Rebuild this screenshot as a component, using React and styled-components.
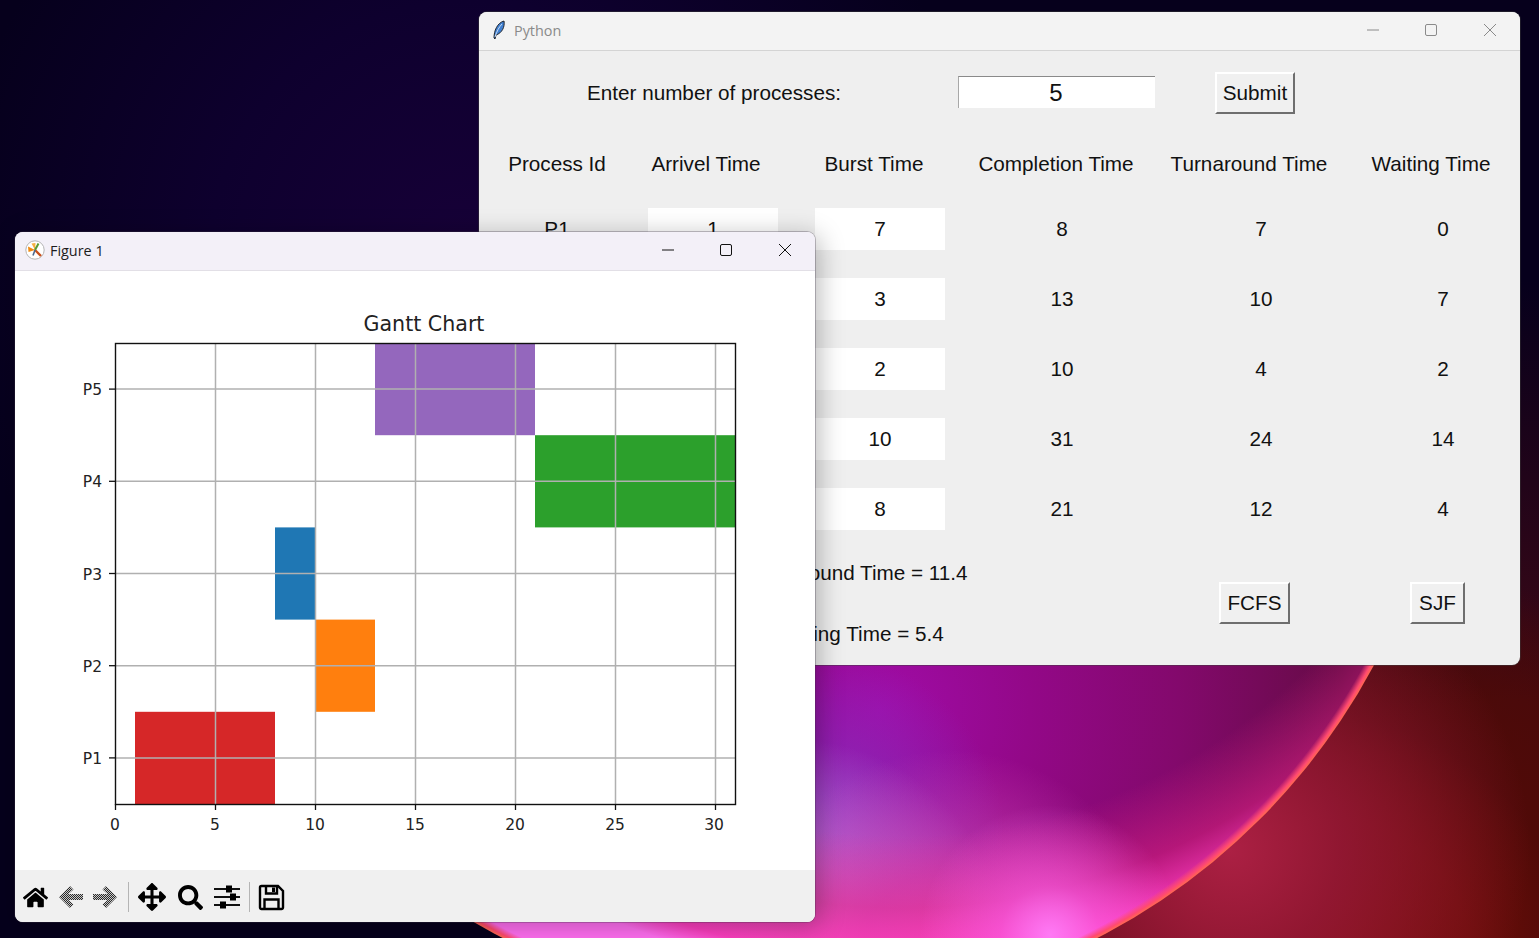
import React from 'react'
import styled, { createGlobalStyle } from 'styled-components'
import { FaHome, FaArrowsAlt, FaSearch } from 'react-icons/fa'

const GlobalStyle = createGlobalStyle`
  html, body { margin: 0; padding: 0; height: 100%; overflow: hidden; }
  * { box-sizing: border-box; }
`

const processes = [
  { id: 'P1', arrival: 1, burst: 7, completion: 8, turnaround: 7, waiting: 0 },
  { id: 'P2', arrival: 3, burst: 3, completion: 13, turnaround: 10, waiting: 7 },
  { id: 'P3', arrival: 6, burst: 2, completion: 10, turnaround: 4, waiting: 2 },
  { id: 'P4', arrival: 7, burst: 10, completion: 31, turnaround: 24, waiting: 14 },
  { id: 'P5', arrival: 9, burst: 8, completion: 21, turnaround: 12, waiting: 4 },
]

const bars = [
  { row: 0, start: 1, end: 8, color: '#d62728' },
  { row: 1, start: 10, end: 13, color: '#ff7f0e' },
  { row: 2, start: 8, end: 10, color: '#1f77b4' },
  { row: 3, start: 21, end: 31, color: '#2ca02c' },
  { row: 4, start: 13, end: 21, color: '#9467bd' },
]

// plot area inside the chart svg
const plot = { left: 100, top: 72, width: 620, height: 461 }
const xPos = (v) => plot.left + v * 20
const rowH = plot.height / 5
const yPos = (r) => plot.top + plot.height - rowH * (r + 0.5)

const Desktop = styled.div`
  position: relative;
  width: 1539px;
  height: 938px;
  overflow: hidden;
  background:
    radial-gradient(circle at 1230px 850px, #ac2044 0, rgba(150, 24, 56, .85) 110px, rgba(110, 16, 40, 0) 300px),
    radial-gradient(circle at 1330px 960px, #7c1006 0, #6c0e08 140px, rgba(80, 10, 8, .9) 240px, rgba(70, 8, 10, 0) 420px),
    radial-gradient(circle at 1500px 900px, #4f0a04 0, #460a0c 200px, rgba(60, 8, 22, .8) 300px, rgba(20, 2, 30, 0) 620px),
    radial-gradient(circle at 470px 260px, #170038 0, #0e002e 260px, rgba(8, 0, 30, 0) 520px),
    #06001c;
`

// the wallpaper's big disc, only its lower part shows past the windows
const Bloom = styled.div`
  position: absolute;
  left: 150px;
  top: -290px;
  width: 1300px;
  height: 1300px;
  border-radius: 50%;
  clip-path: inset(890px 0 0 0);
  background:
    radial-gradient(closest-side, rgba(255, 60, 90, 0) 98.6%, #ff4a70 99.5%, #ff6a50 100%),
    radial-gradient(circle at 900px 1225px, rgba(255, 125, 248, .95) 0, rgba(255, 100, 235, .55) 50px, rgba(240, 70, 200, 0) 130px),
    radial-gradient(circle 720px at 750px 550px, rgba(235, 30, 130, 0) 80%, rgba(235, 36, 140, .5) 90%, rgba(255, 60, 190, .95) 97%, rgba(255, 110, 240, 1) 100%),
    radial-gradient(circle at 800px 1250px, rgba(220, 90, 190, .95) 0, rgba(205, 70, 180, .7) 90px, rgba(180, 40, 160, 0) 210px),
    radial-gradient(circle at 645px 1240px, #d080c8 0, rgba(190, 110, 210, .85) 90px, rgba(150, 70, 200, 0) 210px),
    radial-gradient(circle at 665px 1130px, #8632c6 0, rgba(135, 45, 190, .7) 70px, rgba(140, 30, 170, 0) 190px),
    radial-gradient(circle at 730px 1000px, #a00ca8 0, #930888 150px, #83096c 300px, #660b46 460px);
`

const Win = styled.div`
  position: absolute;
  left: ${(p) => p.$x}px;
  top: ${(p) => p.$y}px;
  width: ${(p) => p.$w}px;
  height: ${(p) => p.$h}px;
  border-radius: 8px;
  overflow: hidden;
  display: flex;
  flex-direction: column;
  background: ${(p) => p.$bg};
  box-shadow: ${(p) => p.$shadow};
`

const TitleBar = styled.div`
  height: 39px;
  flex: none;
  display: flex;
  align-items: center;
  padding: 0 1px 2px 0;
  background: ${(p) => p.$bg};
  border-bottom: 1px solid ${(p) => p.$line};
  color: ${(p) => p.$color};
`

const TitleIcon = styled.svg`
  flex: none;
  margin-left: ${(p) => p.$ml}px;
  margin-right: ${(p) => p.$mr}px;
`

const TitleText = styled.span`
  flex: 1;
  font: 14.4px "Open Sans", "Noto Sans", sans-serif;
`

const CtrlBtn = styled.div`
  width: 58.5px;
  height: 36px;
  display: flex;
  align-items: center;
  justify-content: center;
  svg { display: block; }
`

const Controls = ({ color }) => (
  <>
    <CtrlBtn>
      <svg width="14" height="14" viewBox="0 0 14 14"><path d="M1 7H13" stroke={color} /></svg>
    </CtrlBtn>
    <CtrlBtn>
      <svg width="14" height="14" viewBox="0 0 14 14"><rect x="1.5" y="1.5" width="11" height="11" rx="1.5" fill="none" stroke={color} /></svg>
    </CtrlBtn>
    <CtrlBtn>
      <svg width="14" height="14" viewBox="0 0 14 14"><path d="M1 1L13 13M13 1L1 13" stroke={color} /></svg>
    </CtrlBtn>
  </>
)

const TkBody = styled.div`
  flex: 1;
  display: flex;
  flex-direction: column;
  padding-top: 21px;
  font: 20.7px "Liberation Sans", Arial, sans-serif;
  color: #111;
`

const TopRow = styled.div`
  display: flex;
  align-items: center;
  height: 42px;
`

const TopLabel = styled.div`
  width: 470px;
  text-align: center;
`

const NumberEntry = styled.div`
  width: 197px;
  height: 32px;
  margin: -2px 0 0 9px;
  background: #fff;
  border-top: 1px solid #8a8a8a;
  border-left: 1px solid #a8a8a8;
  padding-right: 2px;
  font-size: 24px;
  line-height: 31px;
  text-align: center;
`

const TkButton = styled.div`
  width: ${(p) => p.$w}px;
  height: 42px;
  line-height: 38px;
  text-align: center;
  background: #f0f0f0;
  border: 2px solid;
  border-color: #fff #6e6e6e #6e6e6e #fff;
  margin-left: ${(p) => p.$ml || 0}px;
`

const HeaderRow = styled.div`
  display: grid;
  grid-template-columns: 156px 142px 194px 170px 216px 148px;
  height: 40px;
  margin-top: 30px;
  align-items: center;
  text-align: center;
  white-space: nowrap;
`

const DataRow = styled.div`
  display: grid;
  grid-template-columns: 156px 156px 178px 186px 212px 152px;
  height: 70px;
  align-items: center;
  justify-items: center;
  text-align: center;
`

const Entry = styled.div`
  width: 130px;
  height: 42px;
  line-height: 42px;
  background: #fff;
`

const Rows = styled.div`
  margin-top: 10px;
`

const Footer = styled.div`
  display: grid;
  grid-template-columns: 676px 185px 1fr;
  grid-template-rows: 61px 61px;
  align-items: center;
  margin-top: -1px;
`

const AvgLabel = styled.div`
  grid-column: 1;
  margin-top: -2px;
  text-align: center;
  white-space: nowrap;
`

const ButtonSlot = styled.div`
  grid-column: ${(p) => p.$col};
  grid-row: 1 / span 2;
  display: flex;
  justify-content: flex-start;
  margin-top: -2px;
`

const Canvas = styled.div`
  flex: none;
  height: 599px;
  background: #fff;
`

const ChartSvg = styled.svg`
  display: block;
  font-family: "DejaVu Sans", sans-serif;
`

const Toolbar = styled.div`
  flex: 1;
  display: flex;
  align-items: center;
  padding: 2px 0 0 8px;
  background: #f0f0f0;
  color: #000;
  svg { display: block; flex: none; }
`

const ToolSep = styled.div`
  width: 1px;
  height: 30px;
  margin: 0 ${(p) => p.$after}px 0 ${(p) => p.$before}px;
  background: #b4b4b4;
`

const ToolSlot = styled.div`
  width: ${(p) => p.$w}px;
  margin-left: ${(p) => p.$ml || 0}px;
  display: flex;
  justify-content: center;
`

const DitherArrow = ({ flip, id }) => (
  <svg width="26" height="26" viewBox="0 0 26 26">
    <defs>
      <pattern id={id} width="2" height="2" patternUnits="userSpaceOnUse">
        <rect width="2" height="2" fill="#c8c8c8" />
        <rect width="1" height="1" fill="#2a2a2a" />
        <rect x="1" y="1" width="1" height="1" fill="#2a2a2a" />
      </pattern>
    </defs>
    <path
      transform={flip ? 'translate(26,0) scale(-1,1)' : undefined}
      d="M1 13L12 2L15.5 5.5L10.5 10H25V16H10.5L15.5 20.5L12 24Z"
      fill={`url(#${id})`}
    />
  </svg>
)

const SlidersIcon = () => (
  <svg width="26" height="26" viewBox="0 0 26 26">
    <path d="M0 5H26M0 13H26M0 21H26" stroke="#111" strokeWidth="2" />
    <rect x="12" y="1.5" width="6" height="7" fill="#000" />
    <rect x="16" y="9.5" width="6" height="7" fill="#000" />
    <rect x="6" y="17.5" width="6" height="7" fill="#000" />
  </svg>
)

const SaveIcon = () => (
  <svg width="27" height="27" viewBox="0 0 27 27">
    <path d="M2 3.5a1.5 1.5 0 0 1 1.5-1.5H20L25 7V23.5a1.5 1.5 0 0 1-1.5 1.5H3.5A1.5 1.5 0 0 1 2 23.5Z" fill="none" stroke="#000" strokeWidth="2.4" />
    <path d="M8 2.5V9.5H19V2.5" fill="none" stroke="#000" strokeWidth="2.4" />
    <rect x="14" y="3.5" width="3" height="4.5" fill="#000" />
    <path d="M6.5 25V15.5H20.5V25" fill="none" stroke="#000" strokeWidth="2.4" />
  </svg>
)

const GanttChart = () => (
  <ChartSvg width="800" height="599" viewBox="0 0 800 599">
    <text x="409" y="60" fontSize="20.6" textAnchor="middle" fill="#222">Gantt Chart</text>
    {bars.map((b) => (
      <rect
        key={b.row}
        x={xPos(b.start)}
        y={yPos(b.row) - rowH / 2}
        width={(b.end - b.start) * 20}
        height={rowH}
        fill={b.color}
      />
    ))}
    {[0, 5, 10, 15, 20, 25, 30].map((t) => (
      <g key={t}>
        {t > 0 && <path d={`M${xPos(t) + 0.5} ${plot.top}V${plot.top + plot.height}`} stroke="#b0b0b0" strokeWidth="1.5" />}
        <path d={`M${xPos(t) + 0.5} ${plot.top + plot.height}v6`} stroke="#111" strokeWidth="1.3" />
        <text x={xPos(t) - (t === 30 ? 1 : 0)} y="559" fontSize="15.5" textAnchor="middle" fill="#222">{t}</text>
      </g>
    ))}
    {processes.map((p, i) => (
      <g key={p.id}>
        <path d={`M${plot.left} ${yPos(i)}H${plot.left + plot.width}`} stroke="#b0b0b0" strokeWidth="1.5" />
        <path d={`M${plot.left - 6} ${yPos(i)}H${plot.left}`} stroke="#111" strokeWidth="1.3" />
        <text x="87" y={yPos(i) + 6} fontSize="15.5" textAnchor="end" fill="#222">{p.id}</text>
      </g>
    ))}
    <rect x={plot.left + 0.5} y={plot.top + 0.5} width={plot.width} height={plot.height} fill="none" stroke="#111" strokeWidth="1.4" />
  </ChartSvg>
)

const App = () => (
  <Desktop>
    <GlobalStyle />
    <Bloom />

    <Win $x={479} $y={12} $w={1041} $h={653} $bg="#efefef" $shadow="0 0 0 1px rgba(60,60,60,.45)">
      <TitleBar $bg="#f3f3f3" $line="#d4d4d4" $color="#8a8a8a">
        <TitleIcon $ml={12} $mr={7} width="16" height="20" viewBox="0 0 16 20">
          <path d="M3 18C3 11 6 3 13 1C14 7 11 13 5 15L4 19Z" fill="#3f7fd0" stroke="#20242c" strokeWidth="1" />
          <path d="M4 17C6 11 8 7 11 4" stroke="#c8dcf4" strokeWidth="1" fill="none" />
        </TitleIcon>
        <TitleText>Python</TitleText>
        <Controls color="#8a8a8a" />
      </TitleBar>
      <TkBody>
        <TopRow>
          <TopLabel>Enter number of processes:</TopLabel>
          <NumberEntry>5</NumberEntry>
          <TkButton $w={80} $ml={60}>Submit</TkButton>
        </TopRow>
        <HeaderRow>
          <div>Process Id</div>
          <div>Arrivel Time</div>
          <div>Burst Time</div>
          <div>Completion Time</div>
          <div>Turnaround Time</div>
          <div>Waiting Time</div>
        </HeaderRow>
        <Rows>
          {processes.map((p) => (
            <DataRow key={p.id}>
              <div>{p.id}</div>
              <Entry>{p.arrival}</Entry>
              <Entry>{p.burst}</Entry>
              <div>{p.completion}</div>
              <div>{p.turnaround}</div>
              <div>{p.waiting}</div>
            </DataRow>
          ))}
        </Rows>
        <Footer>
          <AvgLabel>Average Turnaround Time = 11.4</AvgLabel>
          <ButtonSlot $col={2}>
            <TkButton $w={71} $ml={64}>FCFS</TkButton>
          </ButtonSlot>
          <ButtonSlot $col={3}>
            <TkButton $w={55} $ml={70}>SJF</TkButton>
          </ButtonSlot>
          <AvgLabel>Average Waiting Time = 5.4</AvgLabel>
        </Footer>
      </TkBody>
    </Win>

    <Win $x={15} $y={232} $w={800} $h={690} $bg="#fff" $shadow="0 0 0 1px rgba(60,50,70,.3), 4px 4px 26px rgba(0,0,0,.28)">
      <TitleBar $bg="#f3f0f8" $line="#e2dfe6" $color="#1c1c1c">
        <TitleIcon $ml={10} $mr={5} width="20" height="20" viewBox="0 0 20 20">
          <circle cx="10" cy="10" r="9.2" fill="#fff" stroke="#b4b4b4" />
          <path d="M10 10L3 6.5L3.5 12Z" fill="#f08a10" />
          <path d="M10 10L6.5 3.5L10.5 3Z" fill="#f5b040" />
          <path d="M10 10L16 16" stroke="#c8501c" strokeWidth="2.4" />
          <path d="M10 10L13.5 3.5" stroke="#5a9a30" strokeWidth="2" />
          <path d="M10 10L8 15.5" stroke="#4a6a90" strokeWidth="1.6" />
        </TitleIcon>
        <TitleText>Figure 1</TitleText>
        <Controls color="#111" />
      </TitleBar>
      <Canvas>
        <GanttChart />
      </Canvas>
      <Toolbar>
        <FaHome size={25} />
        <ToolSlot $w={26} $ml={10}><DitherArrow id="ditherBack" /></ToolSlot>
        <ToolSlot $w={26} $ml={8}><DitherArrow id="ditherForward" flip /></ToolSlot>
        <ToolSep $before={10} $after={9} />
        <ToolSlot $w={28}><FaArrowsAlt size={28} /></ToolSlot>
        <ToolSlot $w={26} $ml={11}><FaSearch size={25} /></ToolSlot>
        <ToolSlot $w={26} $ml={11}><SlidersIcon /></ToolSlot>
        <ToolSep $before={9} $after={8} />
        <ToolSlot $w={27}><SaveIcon /></ToolSlot>
      </Toolbar>
    </Win>
  </Desktop>
)

export default App
